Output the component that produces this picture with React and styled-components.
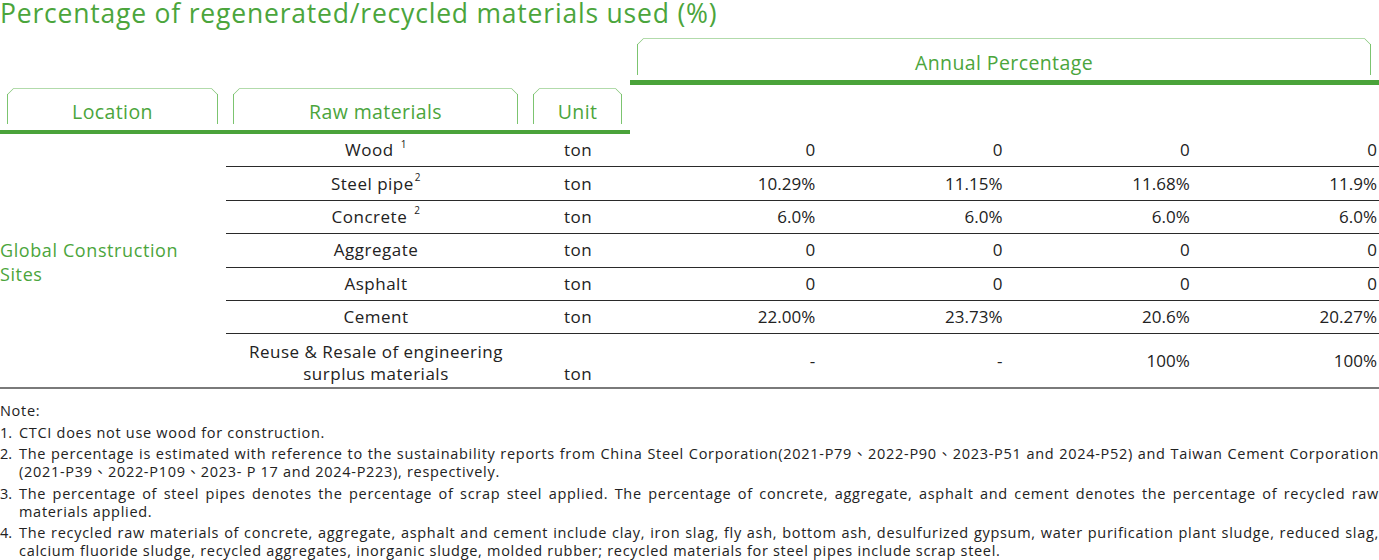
import React from "react";
import styled, { createGlobalStyle } from "styled-components";

const GREEN = "#4ba53c";
const LINE_GREEN = "#4aa33a";

const GlobalStyle = createGlobalStyle`
  * { box-sizing: border-box; }
  body {
    margin: 0;
    background: #fff;
    font-family: "Open Sans", "Noto Sans", "Noto Sans CJK TC", sans-serif;
    color: #222;
  }
`;

const Page = styled.div`
  width: 1379px;
`;

const Title = styled.h1`
  margin: 0 0 3px;
  height: 27px;
  line-height: 27px;
  font-size: 26.5px;
  letter-spacing: 0.8px;
  font-weight: 400;
  color: ${GREEN};
`;

const Table = styled.table`
  width: 100%;
  table-layout: fixed;
  border-collapse: separate;
  border-spacing: 0;
`;

const HeadCell = styled.th`
  padding: ${(p) => p.$pt || 0}px 8px ${(p) => p.$pb || 0}px 7px;
  border-bottom: ${(p) => (p.$line ? `${p.$line}px solid ${LINE_GREEN}` : "none")};
  font-weight: 400;
  vertical-align: bottom;
`;

// chamfered bracket drawn with background strokes
const Tab = styled.div`
  height: ${(p) => p.$h}px;
  display: flex;
  align-items: flex-end;
  justify-content: center;
  line-height: 24px;
  color: ${GREEN};
  font-size: 19.5px;
  letter-spacing: 0.4px;
  background:
    linear-gradient(#b2dbab, #b2dbab) 6px 0 / calc(100% - 12px) 1px no-repeat,
    linear-gradient(#7cc470, #7cc470) 0 6px / 1px calc(100% - 6px) no-repeat,
    linear-gradient(#7cc470, #7cc470) 100% 6px / 1px calc(100% - 6px) no-repeat,
    linear-gradient(to bottom right, transparent calc(50% - 0.8px), #9fd295 50%, transparent calc(50% + 0.8px)) 0 0 / 7px 7px no-repeat,
    linear-gradient(to bottom left, transparent calc(50% - 0.8px), #9fd295 50%, transparent calc(50% + 0.8px)) 100% 0 / 7px 7px no-repeat;
`;

const Cell = styled.td`
  height: ${(p) => (p.$last ? 55 : 33.4)}px;
  padding: ${(p) => (p.$bottom ? "0 0 2px" : "0")};
  border-bottom: ${(p) => (p.$last ? "2px solid #7a7a7a" : "1px solid #2a2a2a")};
  font-size: 17px;
  line-height: 22px;
  letter-spacing: 0.5px;
  color: #222;
  text-align: center;
  vertical-align: ${(p) => (p.$bottom ? "bottom" : "middle")};
`;

const Material = styled(Cell)`
  padding: ${(p) => (p.$last ? "4px" : "0")} 12px 0;
`;

const Value = styled(Cell)`
  text-align: right;
  letter-spacing: 0;
  padding-right: 2px;
`;

const LocationCell = styled.td`
  padding: 2px 20px 0 0;
  border-bottom: 2px solid #7a7a7a;
  font-size: 18px;
  letter-spacing: 0.6px;
  line-height: 24px;
  color: ${GREEN};
  vertical-align: middle;
`;

const Sup = styled.sup`
  font-size: 10px;
  line-height: 0;
  position: relative;
  top: -2px;
  margin-left: ${(p) => (p.$gap ? 7 : 1)}px;
`;

const Notes = styled.div`
  margin-top: 13px;
  font-size: 14.5px;
  letter-spacing: 0.7px;
  line-height: 18px;
  color: #222;
`;

const NoteItem = styled.div`
  display: flex;
  margin-top: 3.5px;
`;

const Num = styled.span`
  flex: 0 0 19px;
  letter-spacing: 0;
`;

const NoteText = styled.span`
  flex: 1;
  text-align: justify;
`;

const rows = [
  { name: "Wood", sup: "1", gap: true, values: ["0", "0", "0", "0"] },
  { name: "Steel pipe", sup: "2", values: ["10.29%", "11.15%", "11.68%", "11.9%"] },
  { name: "Concrete", sup: "2", gap: true, values: ["6.0%", "6.0%", "6.0%", "6.0%"] },
  { name: "Aggregate", values: ["0", "0", "0", "0"] },
  { name: "Asphalt", values: ["0", "0", "0", "0"] },
  { name: "Cement", values: ["22.00%", "23.73%", "20.6%", "20.27%"] },
  {
    name: "Reuse & Resale of engineering surplus materials",
    values: ["-", "-", "100%", "100%"],
    last: true,
  },
];

const notes = [
  "CTCI does not use wood for construction.",
  "The percentage is estimated with reference to the sustainability reports from China Steel Corporation(2021-P79、2022-P90、2023-P51 and 2024-P52) and Taiwan Cement Corporation (2021-P39、2022-P109、2023- P 17 and 2024-P223), respectively.",
  "The percentage of steel pipes denotes the percentage of scrap steel applied. The percentage of concrete, aggregate, asphalt and cement denotes the percentage of recycled raw materials applied.",
  "The recycled raw materials of concrete, aggregate, asphalt and cement include clay, iron slag, fly ash, bottom ash, desulfurized gypsum, water purification plant sludge, reduced slag, calcium fluoride sludge, recycled aggregates, inorganic sludge, molded rubber; recycled materials for steel pipes include scrap steel.",
];

export default function App() {
  return (
    <Page>
      <GlobalStyle />
      <Title>Percentage of regenerated/recycled materials used (%)</Title>

      <Table>
        <colgroup>
          <col style={{ width: 226 }} />
          <col style={{ width: 300 }} />
          <col style={{ width: 104 }} />
          <col />
          <col />
          <col />
          <col />
        </colgroup>
        <thead>
          <tr>
            <HeadCell colSpan={3} />
            <HeadCell colSpan={4} $pt={8} $pb={5} $line={5}>
              <Tab $h={37}>Annual Percentage</Tab>
            </HeadCell>
          </tr>
          <tr>
            <HeadCell $pt={3} $pb={6} $line={4}>
              <Tab $h={36}>Location</Tab>
            </HeadCell>
            <HeadCell $pt={3} $pb={6} $line={4}>
              <Tab $h={36}>Raw materials</Tab>
            </HeadCell>
            <HeadCell $pt={3} $pb={6} $line={4}>
              <Tab $h={36}>Unit</Tab>
            </HeadCell>
            <HeadCell />
            <HeadCell />
            <HeadCell />
            <HeadCell />
          </tr>
        </thead>
        <tbody>
          {rows.map((row, i) => (
            <tr key={row.name}>
              {i === 0 && (
                <LocationCell rowSpan={rows.length}>Global Construction Sites</LocationCell>
              )}
              <Material $last={row.last}>
                {row.name}
                {row.sup && <Sup $gap={row.gap}>{row.sup}</Sup>}
              </Material>
              <Cell $last={row.last} $bottom={row.last}>ton</Cell>
              {row.values.map((v, j) => (
                <Value key={j} $last={row.last}>
                  {v}
                </Value>
              ))}
            </tr>
          ))}
        </tbody>
      </Table>

      <Notes>
        <div>Note:</div>
        {notes.map((n, i) => (
          <NoteItem key={i}>
            <Num>{i + 1}.</Num>
            <NoteText>{n}</NoteText>
          </NoteItem>
        ))}
      </Notes>
    </Page>
  );
}
